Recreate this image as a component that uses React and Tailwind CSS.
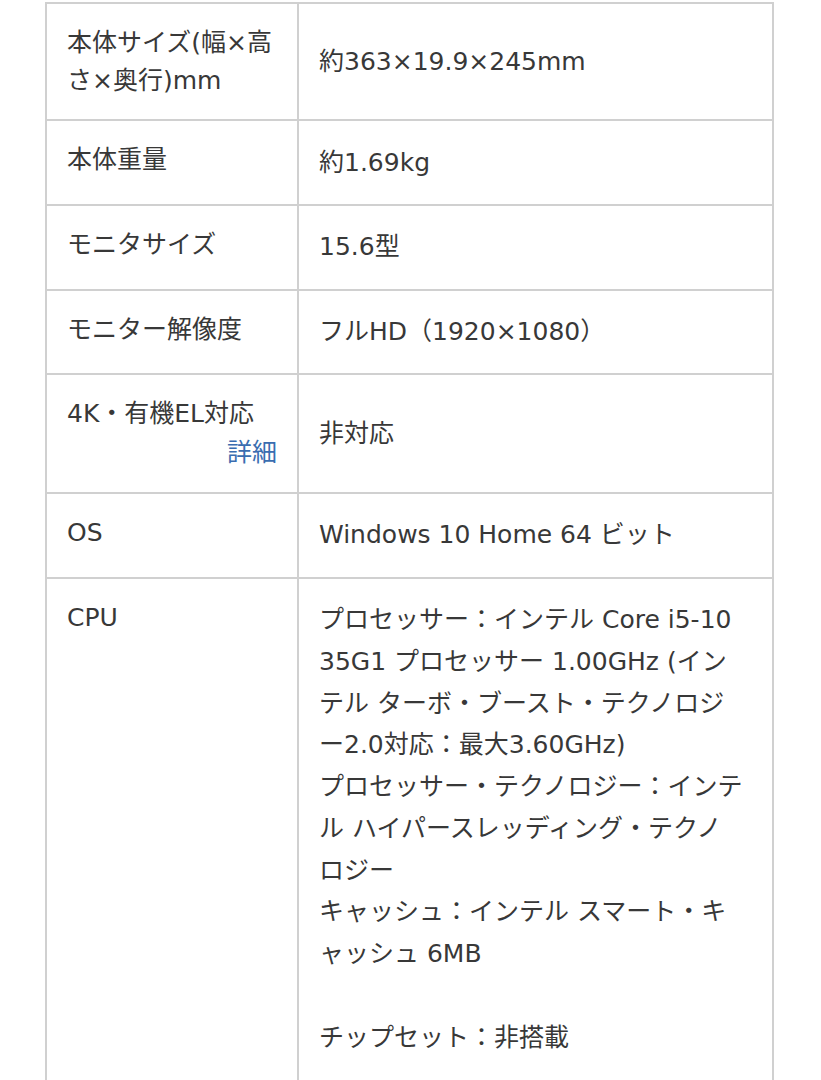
const rows = [
    { label: ['本体サイズ(幅×高', 'さ×奥行)mm'], value: ['約363×19.9×245mm'] },
    { label: ['本体重量'], value: ['約1.69kg'] },
    { label: ['モニタサイズ'], value: ['15.6型'] },
    { label: ['モニター解像度'], value: ['フルHD（1920×1080）'] },
    { label: ['4K・有機EL対応'], link: '詳細', value: ['非対応'] },
    { label: ['OS'], value: ['Windows 10 Home 64 ビット'] },
    {
        label: ['CPU'],
        value: [
            'プロセッサー：インテル Core i5-10',
            '35G1 プロセッサー 1.00GHz (イン',
            'テル ターボ・ブースト・テクノロジ',
            'ー2.0対応：最大3.60GHz)',
            'プロセッサー・テクノロジー：インテ',
            'ル ハイパースレッディング・テクノ',
            'ロジー',
            'キャッシュ：インテル スマート・キ',
            'ャッシュ 6MB',
            '',
            'チップセット：非搭載',
            '',
        ],
    },
];

const App = () => {
    return (
        <div
            className="min-h-screen bg-white pt-[2px] text-[25px] text-[#383838]"
            style={{ fontFamily: '"DejaVu Sans", "Noto Sans CJK JP", sans-serif' }}
        >
            <div className="ml-[45px] w-[729px] border-2 border-[#d0d0d0]">
                {rows.map((row, idx) => (
                    <div
                        key={idx}
                        className={`flex ${idx > 0 ? 'border-t-2 border-[#d0d0d0]' : ''}`}
                    >
                        <div className="w-[252px] shrink-0 border-r-2 border-[#d0d0d0] px-5 py-5 leading-[37.5px]">
                            {row.label.map((l, i) => (
                                <div key={i} className="whitespace-nowrap">{l}</div>
                            ))}
                            {row.link && (
                                <div className="text-right text-[#3a6db0] leading-[39px]">
                                    <a href="#">{row.link}</a>
                                </div>
                            )}
                        </div>
                        <div className="flex flex-1 flex-col justify-center px-5 py-[20.5px] leading-[41.75px]">
                            {row.value.map((v, i) => (
                                <div key={i} className="whitespace-nowrap min-h-[41.75px]">{v}</div>
                            ))}
                        </div>
                    </div>
                ))}
            </div>
        </div>
    );
};

export default App;
